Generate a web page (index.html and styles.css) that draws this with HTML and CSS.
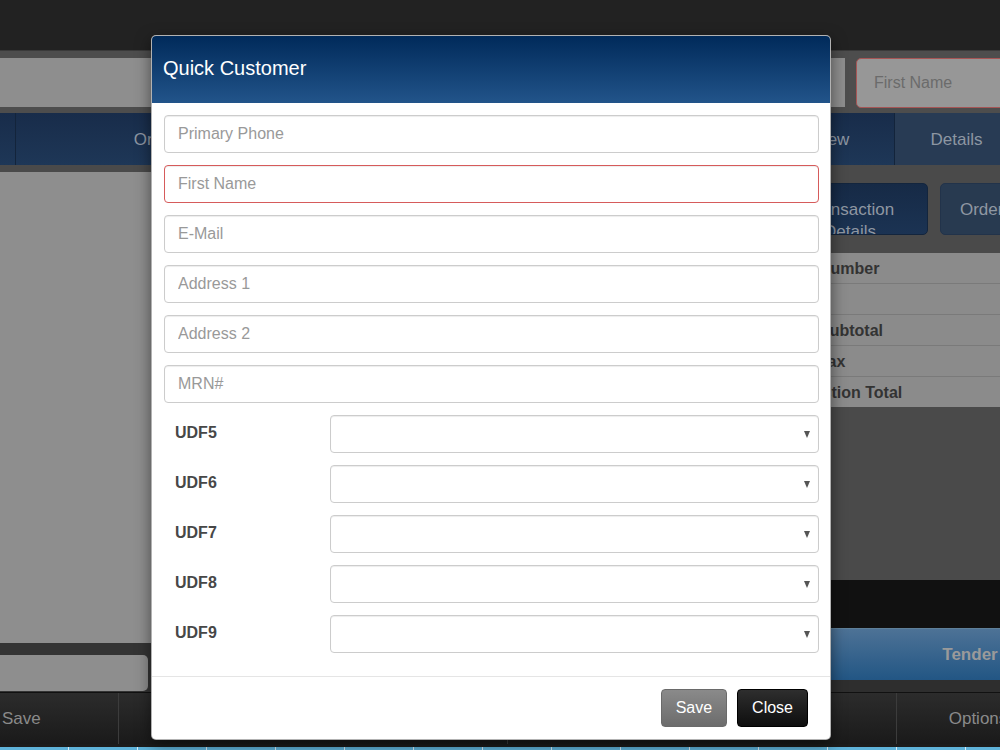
FILE: index.html
```html
<!DOCTYPE html>
<html lang="en">
<head>
    <meta charset="UTF-8">
    <meta name="viewport" content="width=device-width, initial-scale=1.0">
    <title>Quick Customer</title>
    <link rel="stylesheet" href="styles.css">
</head>
<body>
    <div class="app">
        <div class="topbar"></div>

        <div class="searchbar">
            <div class="search-field"></div>
            <input type="text" class="bg-input invalid" placeholder="First Name">
        </div>

        <nav class="tabs">
            <div class="tab tab-stub"></div>
            <div class="tab tab-order">Order</div>
            <div class="tab tab-customer">Customer</div>
            <div class="tab tab-review">Review</div>
            <div class="tab tab-details">Details</div>
        </nav>

        <div class="workspace">
            <div class="left-col">
                <div class="cart"></div>
                <div class="scan-input"></div>
            </div>

            <div class="right-col">
                <div class="summary">
                    <div class="summary-buttons">
                        <div class="summary-btn active">Transaction Details</div>
                        <div class="summary-btn">Order Details</div>
                    </div>
                    <div class="totals">
                        <div class="totals-row">Order Number</div>
                        <div class="totals-row"></div>
                        <div class="totals-row">Order Subtotal</div>
                        <div class="totals-row">Order Tax</div>
                        <div class="totals-row">Transaction Total</div>
                    </div>
                </div>
                <div class="black-band"></div>
                <div class="tender-row">
                    <div class="tender-btn">Tender</div>
                </div>
                <div class="dark-band"></div>
            </div>
        </div>

        <div class="action-bar">
            <div class="action-btn action-save">Save</div>
            <div class="action-btn action-mid"></div>
            <div class="action-btn action-mid"></div>
            <div class="action-btn action-options">Options</div>
        </div>

        <div class="tiles">
            <span></span><span></span><span></span><span></span><span></span>
            <span></span><span></span><span></span><span></span><span></span>
            <span></span><span></span><span></span><span></span><span></span>
        </div>
    </div>

    <!-- Quick Customer dialog -->
    <div class="modal">
        <div class="modal-header">
            <h4 class="modal-title">Quick Customer</h4>
        </div>
        <div class="modal-body">
            <div class="form-group">
                <input type="text" class="form-control" placeholder="Primary Phone">
            </div>
            <div class="form-group">
                <input type="text" class="form-control invalid" placeholder="First Name">
            </div>
            <div class="form-group">
                <input type="text" class="form-control" placeholder="E-Mail">
            </div>
            <div class="form-group">
                <input type="text" class="form-control" placeholder="Address 1">
            </div>
            <div class="form-group">
                <input type="text" class="form-control" placeholder="Address 2">
            </div>
            <div class="form-group">
                <input type="text" class="form-control" placeholder="MRN#">
            </div>

            <div class="form-group udf-row">
                <label for="udf5">UDF5</label>
                <div class="select-wrap"><select id="udf5" class="form-control"><option></option></select></div>
            </div>
            <div class="form-group udf-row">
                <label for="udf6">UDF6</label>
                <div class="select-wrap"><select id="udf6" class="form-control"><option></option></select></div>
            </div>
            <div class="form-group udf-row">
                <label for="udf7">UDF7</label>
                <div class="select-wrap"><select id="udf7" class="form-control"><option></option></select></div>
            </div>
            <div class="form-group udf-row">
                <label for="udf8">UDF8</label>
                <div class="select-wrap"><select id="udf8" class="form-control"><option></option></select></div>
            </div>
            <div class="form-group udf-row">
                <label for="udf9">UDF9</label>
                <div class="select-wrap"><select id="udf9" class="form-control"><option></option></select></div>
            </div>
        </div>
        <div class="modal-footer">
            <button class="btn btn-save">Save</button>
            <button class="btn btn-close">Close</button>
        </div>
    </div>
</body>
</html>
```

FILE: styles.css
```css
* {
    box-sizing: border-box;
}

body {
    margin: 0;
    width: 1000px;
    height: 750px;
    overflow: hidden;
    font-family: 'Liberation Sans', Arial, Helvetica, sans-serif;
    background-color: #222;
}

.app {
    display: flex;
    flex-direction: column;
    height: 750px;
}

.topbar {
    height: 50px;
    background-color: #222;
}

/* search row behind the dialog */
.searchbar {
    height: 63px;
    display: flex;
    gap: 11px;
    padding: 7px 0 6px;
    background-color: #4d4d4d;
    border-top: 1px solid #3a3a3a;
    overflow: hidden;
}

.search-field {
    flex: 1;
    background-color: #8e8e8e;
}

.bg-input {
    width: 160px;
    flex-shrink: 0;
    height: 50px;
    margin-right: -16px;
    padding: 0 17px;
    font-family: inherit;
    font-size: 16px;
    background-color: #979797;
    border: 1px solid #a65555;
    border-radius: 5px 0 0 5px;
}

.bg-input::placeholder {
    color: #6b6b6b;
}

.tabs {
    height: 52px;
    display: flex;
    overflow: hidden;
    background: linear-gradient(#182c4a, #1e3757);
}

.tab {
    flex-shrink: 0;
    height: 52px;
    line-height: 54px;
    text-align: center;
    font-size: 17px;
    color: #8d96a2;
    border-right: 1px solid #13243b;
}

.tab-stub { width: 16px; }
.tab-order { width: 280px; }
.tab-customer { width: 453px; }
.tab-review { width: 146px; }

.tab-details {
    width: 124px;
    background: #283b54;
}

.workspace {
    height: 527px;
    display: grid;
    grid-template-columns: 560px 1fr;
    border-top: 7px solid #4a4a4a;
}

.left-col {
    display: flex;
    flex-direction: column;
    background-color: #343434;
}

.cart {
    flex: 1;
    background-color: #8e8e8e;
}

.scan-input {
    width: 148px;
    height: 36px;
    margin: 12px 0 1px;
    background-color: #8e8e8e;
    border-radius: 0 5px 5px 0;
}

.right-col {
    display: flex;
    flex-direction: column;
    overflow: hidden;
    background-color: #4a4a4a;
}

.summary {
    flex: 1;
    padding-top: 11px;
}

.summary-buttons {
    display: flex;
    gap: 12px;
    padding-left: 220px;
}

.summary-btn {
    flex-shrink: 0;
    width: 148px;
    height: 52px;
    padding: 15px 12px 0 4px;
    overflow: hidden;
    text-align: center;
    font-size: 17px;
    line-height: 22px;
    color: #8f97a2;
    background-color: #283a50;
    border: 1px solid #22334a;
    border-radius: 5px;
}

.summary-btn.active {
    padding: 15px 12px 0 4px;
    background: linear-gradient(#162a46, #1b3353);
    border-color: #13253d;
}

.totals {
    margin: 18px 0 0 205px;
    background-color: #8b8b8b;
}

.totals-row {
    height: 31px;
    padding-left: 6px;
    line-height: 31px;
    font-size: 16px;
    font-weight: bold;
    color: #333;
    border-bottom: 1px solid #7a7a7a;
}

.totals-row:last-child {
    height: 30px;
    border-bottom: none;
}

.black-band {
    height: 48px;
    background-color: #111;
}

.tender-row {
    height: 52px;
    padding-left: 200px;
    background-color: #111;
}

.tender-btn {
    width: 420px;
    height: 52px;
    line-height: 52px;
    text-align: center;
    font-size: 17px;
    font-weight: bold;
    color: #9a9a9a;
    background: linear-gradient(#4d7296, #225684);
    border-top: 1px solid #5f8099;
}

.dark-band {
    height: 12px;
    background-color: #2e2e2e;
}

.action-bar {
    height: 55px;
    display: flex;
    overflow: hidden;
    background-color: #1c1c1c;
    border-top: 1px solid #111;
}

.action-btn {
    flex-shrink: 0;
    height: 51px;
    line-height: 51px;
    text-align: center;
    font-size: 17px;
    color: #8a8a8a;
    background: linear-gradient(#2c2c2c, #1a1a1a);
    border-right: 1px solid #3c3c3c;
}

.action-save {
    width: 119px;
    padding-left: 2px;
    text-align: left;
}

.action-mid { width: 389px; }
.action-options { width: 163px; }

.tiles {
    height: 3px;
    display: flex;
    background-color: #5fb3da;
}

.tiles span {
    width: 69px;
    flex-shrink: 0;
    border-right: 1px solid #d8eef8;
}

/* dialog */
.modal {
    position: absolute;
    left: 151px;
    top: 35px;
    width: 680px;
    height: 705px;
    display: flex;
    flex-direction: column;
    background-color: #fff;
    border: 1px solid rgba(0, 0, 0, 0.3);
    border-radius: 5px;
    box-shadow: 0 5px 15px rgba(0, 0, 0, 0.5);
}

.modal-header {
    height: 67px;
    display: flex;
    align-items: center;
    padding: 0 11px 2px;
    background: linear-gradient(#002a5a, #22548a);
    border-radius: 4px 4px 0 0;
}

.modal-title {
    margin: 0;
    font-size: 20px;
    font-weight: normal;
    color: #fff;
}

.modal-body {
    flex: 1;
    padding: 12px 11px 0 12px;
}

.form-group {
    margin-bottom: 12px;
}

.form-control {
    display: block;
    width: 100%;
    height: 38px;
    padding: 0 13px;
    font-family: inherit;
    font-size: 16px;
    color: #555;
    background-color: #fff;
    border: 1px solid #ccc;
    border-radius: 4px;
    box-shadow: inset 0 1px 1px rgba(0, 0, 0, 0.075);
}

.form-control::placeholder {
    color: #999;
}

.form-control.invalid {
    border-color: #d65b5b;
}

.udf-row {
    display: flex;
    align-items: center;
}

.udf-row label {
    width: 166px;
    flex-shrink: 0;
    padding: 0 0 2px 11px;
    font-size: 16px;
    font-weight: bold;
    color: #474747;
}

.select-wrap {
    position: relative;
    flex: 1;
}

.select-wrap select {
    appearance: none;
    -webkit-appearance: none;
}

.select-wrap::after {
    content: "";
    position: absolute;
    right: 9px;
    top: 16px;
    border-left: 3.5px solid transparent;
    border-right: 3.5px solid transparent;
    border-top: 7px solid #555;
}

.modal-footer {
    display: flex;
    justify-content: flex-end;
    gap: 10px;
    padding: 12px 22px 12px;
    border-top: 1px solid #e5e5e5;
}

.btn {
    height: 38px;
    padding: 0 14px;
    font-family: inherit;
    font-size: 16px;
    color: #fff;
    border-radius: 4px;
    cursor: pointer;
}

.btn-save {
    background: linear-gradient(#8a8a8a, #6c6c6c);
    border: 1px solid #6a6a6a;
}

.btn-close {
    background: linear-gradient(#2e2e2e, #0e0e0e);
    border: 1px solid #000;
}
```
